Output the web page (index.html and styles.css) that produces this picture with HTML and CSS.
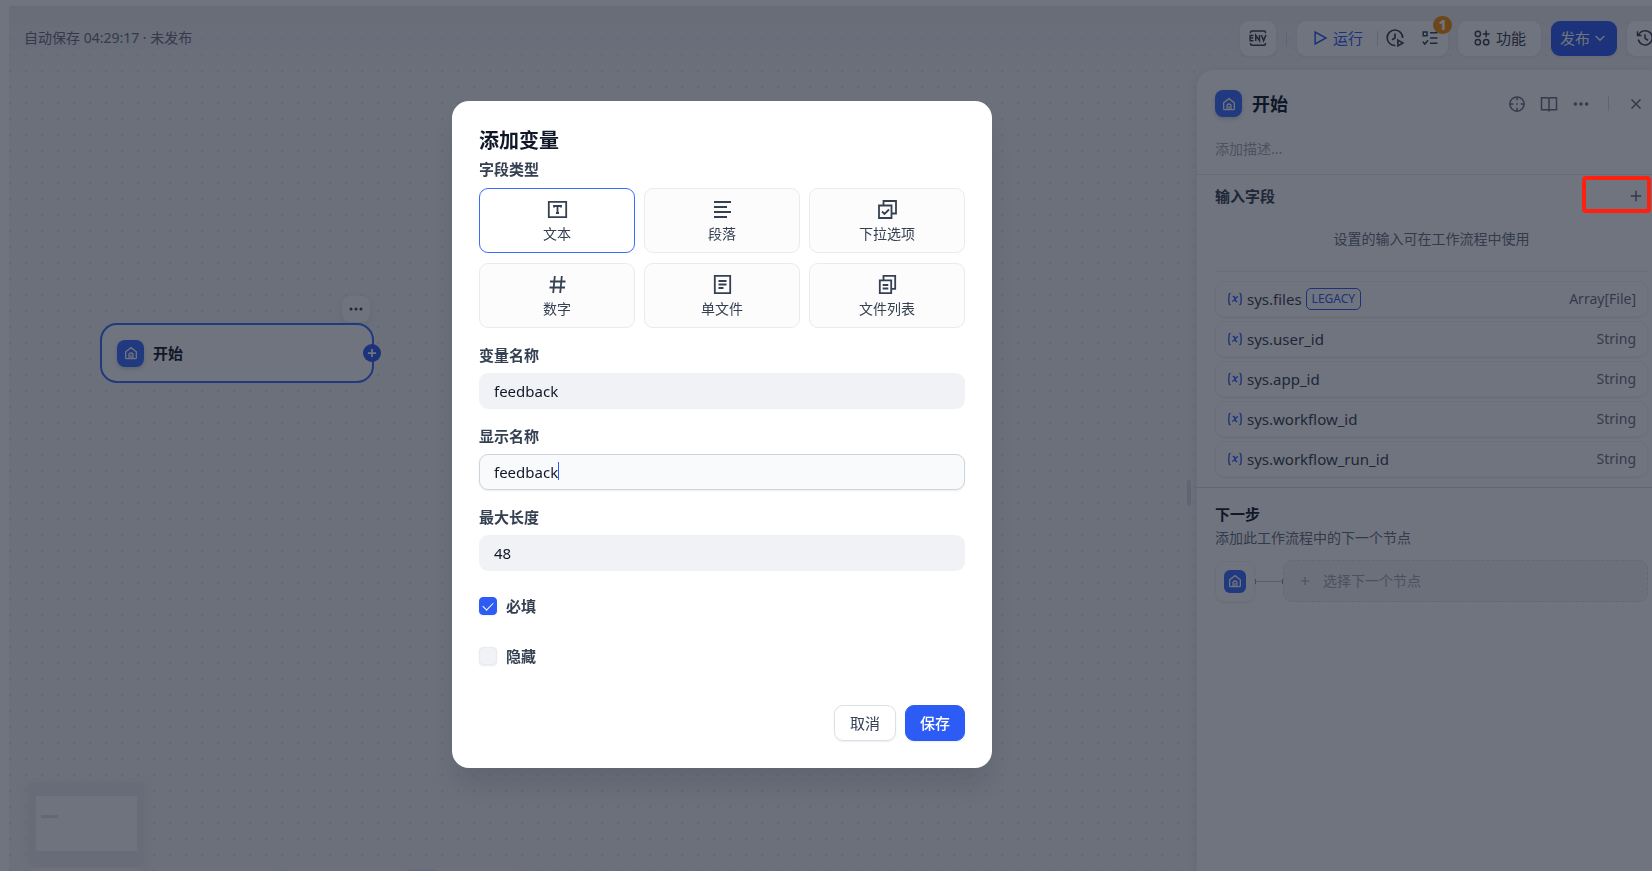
FILE: index.html
```html
<!DOCTYPE html>
<html lang="zh-CN">
<head>
<meta charset="utf-8">
<meta name="viewport" content="width=device-width, initial-scale=1">
<title>添加变量</title>
<link rel="stylesheet" href="styles.css">
</head>
<body>
<svg class="sprite" aria-hidden="true">
  <symbol id="home" viewBox="0 0 24 24"><path d="M4 10.200 12 4l8 6.200V19a1.500 1.500 0 0 1-1.500 1.500h-13A1.500 1.500 0 0 1 4 19z"/><path d="M9 20.500V15a3 3 0 0 1 6 0v5.500M12 15v5"/></symbol>
  <symbol id="plus" viewBox="0 0 24 24"><path d="M12 5v14M5 12h14"/></symbol>
  <symbol id="dots" viewBox="0 0 24 24"><g fill="currentColor" stroke="none"><circle cx="4.500" cy="12" r="2.300"/><circle cx="12" cy="12" r="2.300"/><circle cx="19.500" cy="12" r="2.300"/></g></symbol>
  <symbol id="var" viewBox="0 0 24 24"><path d="M5.500 3.500C3.500 3.500 3 5 3 6.500v3C3 11 2.500 12 1.500 12 2.500 12 3 13 3 14.500v3c0 1.500.5 3 2.500 3M18.500 3.500c2 0 2.500 1.500 2.500 3v3c0 1.500.5 2.500 1.500 2.500-1 0-1.500 1-1.500 2.500v3c0 1.500-.5 3-2.500 3"/><path d="M8.500 8.500c2.500-.8 3 1 3.500 3.500s1 4.300 3.500 3.500M16.500 8.500c-3 0-5.500 7-9 7"/></symbol>
</svg>

<div class="app">
  <main class="studio">
    <header class="topbar">
      <p class="save-state">自动保存 04:29:17 · 未发布</p>
      <div class="actions">
        <button class="btn btn-square" aria-label="环境变量">
          <svg class="icon i18" viewBox="0 0 24 24"><path d="M2 5.500V4.500A2 2 0 0 1 4 2.500h16a2 2 0 0 1 2 2v1M2 18.500v1a2 2 0 0 0 2 2h16a2 2 0 0 0 2-2v-1"/><path d="M6 8.500H1.500v7H6M1.500 12h4M9 16V8.500l5 7V8M16.500 8l3 7.500 3-7.500"/></svg>
        </button>
        <span class="bar"></span>
        <div class="btn run-group">
          <button class="plain run"><svg class="icon i18" viewBox="0 0 24 24"><path d="M5.500 4v16L20 12z"/></svg>运行</button>
          <span class="bar bar-small"></span>
          <button class="plain tool" aria-label="运行历史"><svg class="icon i20" viewBox="0 0 24 24"><path d="M12.500 21A9.300 9.300 0 1 1 21.200 12M12 6.500V12l-3.500 2"/><path d="M15.500 14.500v7l6-3.500z"/></svg></button>
          <button class="plain tool" aria-label="检查清单"><svg class="icon i18" viewBox="0 0 24 24"><path d="M3 4h5v5H3zM12 5h10M12 12h10M12 19h10M2.500 17l2.500 3 4.500-5"/></svg><span class="badge">1</span></button>
        </div>
        <button class="btn features"><svg class="icon i18" viewBox="0 0 24 24"><circle cx="6.500" cy="6.500" r="3.500"/><circle cx="6.500" cy="17.500" r="3.500"/><circle cx="17.500" cy="17.500" r="3.500"/><path d="M17.500 2v9M13 6.500h9"/></svg>功能</button>
        <button class="btn publish">发布<svg class="icon i16" viewBox="0 0 24 24"><path d="m5.500 9 6.500 6.500L18.500 9"/></svg></button>
        <button class="btn btn-square btn-history" aria-label="版本历史"><svg class="icon i18" viewBox="0 0 24 24"><path d="M2 3v5.500h5.500M3 14a9.500 9.500 0 1 0 .5-6M12 7v5.500l4 2.500"/></svg></button>
      </div>
    </header>

    <div class="workspace">
      <section class="canvas" aria-label="画布">
        <button class="node-menu" aria-label="更多"><svg class="icon i16" viewBox="0 0 24 24"><use href="#dots"/></svg></button>
        <div class="node">
          <span class="home-tile"><svg class="icon i16" viewBox="0 0 24 24"><use href="#home"/></svg></span>
          <span class="node-name">开始</span>
          <button class="node-add" aria-label="添加节点"><svg class="icon i14" viewBox="0 0 24 24"><use href="#plus"/></svg></button>
        </div>
        <div class="minimap"><div class="minimap-view"><span class="minimap-node"></span></div></div>
        <div class="dock"><span class="dock-a"></span><span class="dock-b"></span><span class="dock-c"><i></i></span></div>
        <span class="resizer"></span>
      </section>

      <aside class="panel">
        <div class="panel-head">
          <div class="panel-title">
            <span class="home-tile"><svg class="icon i16" viewBox="0 0 24 24"><use href="#home"/></svg></span>
            <h2>开始</h2>
            <div class="panel-tools">
              <button class="plain" aria-label="定位"><svg class="icon i18" viewBox="0 0 24 24"><circle cx="12" cy="12" r="9.500"/><path d="M12 2.500V7M12 17v4.500M2.500 12H7M17 12h4.500M12 11v2M11 12h2"/></svg></button>
              <button class="plain" aria-label="文档"><svg class="icon i18" viewBox="0 0 24 24"><path d="M12 5.500V22M12 5.500C12 4.500 11 3.500 9.500 3.500H2V19.500H9.500C11 19.500 12 20 12 21C12 20 13 19.500 14.500 19.500H22V3.500H14.500C13 3.500 12 4.500 12 5.500z"/></svg></button>
              <button class="plain" aria-label="更多"><svg class="icon i18" viewBox="0 0 24 24"><use href="#dots"/></svg></button>
              <span class="bar bar-tools"></span>
              <button class="plain close" aria-label="关闭"><svg class="icon i18" viewBox="0 0 24 24"><path d="m6 6 12 12M18 6 6 18"/></svg></button>
            </div>
          </div>
          <p class="panel-desc">添加描述...</p>
        </div>

        <section class="inputs">
          <div class="inputs-head">
            <h3>输入字段</h3>
            <button class="plain add-field" aria-label="添加输入字段"><svg class="icon i18" viewBox="0 0 24 24"><use href="#plus"/></svg></button>
          </div>
          <p class="inputs-hint">设置的输入可在工作流程中使用</p>
          <ul class="vars">
            <li><svg class="icon i16" viewBox="0 0 24 24"><use href="#var"/></svg><span>sys.files</span><span class="legacy">LEGACY</span><span class="type">Array[File]</span></li>
            <li><svg class="icon i16" viewBox="0 0 24 24"><use href="#var"/></svg><span>sys.user_id</span><span class="type">String</span></li>
            <li><svg class="icon i16" viewBox="0 0 24 24"><use href="#var"/></svg><span>sys.app_id</span><span class="type">String</span></li>
            <li><svg class="icon i16" viewBox="0 0 24 24"><use href="#var"/></svg><span>sys.workflow_id</span><span class="type">String</span></li>
            <li><svg class="icon i16" viewBox="0 0 24 24"><use href="#var"/></svg><span>sys.workflow_run_id</span><span class="type">String</span></li>
          </ul>
        </section>

        <section class="next">
          <h3>下一步</h3>
          <p>添加此工作流程中的下一个节点</p>
          <div class="next-row">
            <span class="next-from"><span class="home-tile home-small"><svg class="icon i16" viewBox="0 0 24 24"><use href="#home"/></svg></span></span>
            <span class="link"></span>
            <button class="next-pick"><svg class="icon i14" viewBox="0 0 24 24"><use href="#plus"/></svg>选择下一个节点</button>
          </div>
        </section>
      </aside>
    </div>
  </main>
</div>

<div class="overlay">
  <form class="modal" role="dialog" aria-labelledby="modal-title">
    <h1 id="modal-title">添加变量</h1>
    <h2 class="label">字段类型</h2>
    <div class="types">
      <button type="button" class="type-card selected"><svg class="icon i21" viewBox="0 0 21 21"><path d="M1.800 2.800h17.400v15.400H1.800zM7 8.500V7h7v1.500M10.500 7v7M9 14h3"/></svg>文本</button>
      <button type="button" class="type-card"><svg class="icon i21" viewBox="0 0 21 21"><path d="M2 3h17M2 8h13M2 13h17M2 18h13"/></svg>段落</button>
      <button type="button" class="type-card"><svg class="icon i21" viewBox="0 0 21 21"><path d="M2 6.500h12.500V19H2zM6.500 6.500V2H19v12.500h-4.500M5 12.500l2.500 2.500L12 10.500"/></svg>下拉选项</button>
      <button type="button" class="type-card"><svg class="icon i21" viewBox="0 0 21 21"><path d="M7.800 2 6.200 19M14.800 2l-1.600 17M3 7.500h15.500M2.500 13.500H18"/></svg>数字</button>
      <button type="button" class="type-card"><svg class="icon i21" viewBox="0 0 21 21"><path d="M2.800 1.800h15.400v17.400H2.800zM6.500 7h8M6.500 10.500h8M6.500 14h5"/></svg>单文件</button>
      <button type="button" class="type-card"><svg class="icon i21" viewBox="0 0 21 21"><path d="M2.800 6.300h11.400v12.900H2.800zM6.500 6V1.800h11.700v13h-4M5.700 11h5.600M5.700 14.500h5.600"/></svg>文件列表</button>
    </div>
    <div class="fields">
      <div class="field">
        <label class="label" for="var-name">变量名称</label>
        <input id="var-name" type="text" value="feedback">
      </div>
      <div class="field">
        <label class="label" for="show-name">显示名称</label>
        <div class="input-wrap"><input id="show-name" class="active" type="text" value="feedback"><span class="caret"></span></div>
      </div>
      <div class="field">
        <label class="label" for="max-len">最大长度</label>
        <input id="max-len" type="text" inputmode="numeric" value="48">
      </div>
    </div>
    <div class="checks">
      <label class="check label"><input type="checkbox" checked>必填</label>
      <label class="check label"><input type="checkbox">隐藏</label>
    </div>
    <div class="modal-foot">
      <button type="button" class="btn-cancel">取消</button>
      <button type="submit" class="btn-save">保存</button>
    </div>
  </form>
</div>
<span class="callout"></span>
</body>
</html>
```

FILE: styles.css
```css
:root {
  --text: #101828;
  --text-2: #354052;
  --text-3: #676f83;
  --muted: #a2a8b6;
  --blue: #2d5bf5;
  --line: #e4e7ec;
}

* { box-sizing: border-box; }

body {
  margin: 0;
  background: #fff;
  color: var(--text-2);
  font-family: "Noto Sans", "Noto Sans CJK SC", sans-serif;
  font-size: 14px;
  line-height: 20px;
}

h1, h2, h3, p, ul { margin: 0; padding: 0; }
button { font: inherit; color: inherit; margin: 0; padding: 0; border: 0; background: none; cursor: pointer; }
.sprite { position: absolute; width: 0; height: 0; }

.icon { display: block; flex: none; fill: none; stroke: currentColor; stroke-width: 2; }
.i14 { width: 14px; height: 14px; }
.i16 { width: 16px; height: 16px; }
.i18 { width: 18px; height: 18px; }
.i20 { width: 20px; height: 20px; }
.i21 { width: 21px; height: 21px; }

.app { display: flex; height: 100vh; padding: 6px 0 0 9px; overflow: hidden; }
.studio {
  flex: 1;
  min-width: 0;
  display: flex;
  flex-direction: column;
  background: radial-gradient(circle at 1px 1px, #e0e3ea 1px, transparent 2px) 0 0 / 16px 16px, #f2f4f7;
}

.topbar {
  display: flex;
  align-items: center;
  justify-content: space-between;
  height: 64px;
  padding-left: 15px;
  background: linear-gradient(#eaecf0, rgba(242, 244, 247, 0));
}
.save-state { color: var(--text-3); }
.actions { display: flex; align-items: center; gap: 10px; margin-right: -11px; }
.btn {
  display: flex;
  align-items: center;
  height: 35px;
  border-radius: 9px;
  background: #fff;
  box-shadow: 0 0 0 1px #e9ebf0, 0 1px 2px #d0d5dd;
  font-size: 15px;
}
.btn-square { width: 36px; justify-content: center; }
.bar { width: 1px; height: 15px; background: #d5d9e2; }
.run-group { padding-left: 14px; }
.plain { display: flex; align-items: center; justify-content: center; }
.run { gap: 4px; color: var(--blue); margin-right: 14px; }
.tool { position: relative; width: 35px; height: 35px; }
.badge {
  position: absolute;
  top: -5px;
  right: -4px;
  width: 19px;
  height: 18px;
  border-radius: 9px;
  background: #f79009;
  color: #fff;
  font-size: 14px;
  font-weight: 800;
  line-height: 18px;
  text-align: center;
}
.features { gap: 5px; padding: 0 15px; }
.publish { gap: 2px; padding: 0 9px; background: var(--blue); color: #fff; }

.workspace { flex: 1; display: flex; min-height: 0; }
.canvas { position: relative; flex: 1; min-width: 0; overflow: hidden; }

.home-tile {
  display: flex;
  align-items: center;
  justify-content: center;
  flex: none;
  width: 27px;
  height: 27px;
  border-radius: 8px;
  background: #3b6cff;
  color: #fff;
  box-shadow: 0 2px 4px #cfd4df;
}
.home-small { width: 22px; height: 23px; border-radius: 6px; box-shadow: none; }

.node {
  position: absolute;
  left: 91px;
  top: 253px;
  width: 274px;
  height: 60px;
  display: flex;
  align-items: center;
  gap: 9px;
  padding-left: 15px;
  border: 2px solid #3b6cff;
  border-radius: 17px;
  background: #fff;
}
.node-name { color: var(--text); font-size: 15px; font-weight: 600; }
.node-add {
  position: absolute;
  right: -9px;
  top: 19px;
  width: 18px;
  height: 18px;
  display: flex;
  align-items: center;
  justify-content: center;
  border-radius: 50%;
  background: var(--blue);
  color: #fff;
}
.node-add .icon { stroke-width: 3; }
.node-menu {
  position: absolute;
  left: 333px;
  top: 226px;
  width: 28px;
  height: 26px;
  display: flex;
  align-items: center;
  justify-content: center;
  border-radius: 8px;
  background: #fcfcfd;
  box-shadow: 0 2px 6px #dde1e9;
}

.minimap {
  position: absolute;
  left: 20px;
  bottom: 7px;
  width: 115px;
  height: 81px;
  padding: 13px 7px;
  background: #e9ebf0;
  box-shadow: 0 2px 8px #e4e7ec;
}
.minimap-view { height: 55px; padding: 19px 5px; background: #fcfcfd; }
.minimap-node { display: block; width: 17px; height: 3px; background: #dde0e6; }
.dock { position: absolute; left: 22px; bottom: 0; display: flex; gap: 15px; }
.dock span { height: 3px; border-radius: 8px 8px 0 0; background: #fbf8fd; }
.dock-a { width: 110px; }
.dock-b { width: 117px; }
.dock-c { width: 231px; padding: 1px 0 0 119px; }
.dock-c i { display: block; width: 30px; height: 2px; background: #e6e9fd; }
.resizer { position: absolute; right: 6px; top: 410px; width: 4px; height: 26px; border-radius: 2px; background: #d5d9e2; }

.panel { width: 455px; border-radius: 17px 0 0 0; background: #fff; box-shadow: 0 0 8px #dfe3ea; }
.panel-head { padding: 20px 7px 15px 18px; border-bottom: 1px solid var(--line); }
.panel-title { display: flex; align-items: center; gap: 10px; height: 27px; }
.panel-title h2 { color: var(--text); font-size: 18px; font-weight: 700; }
.panel-tools { display: flex; align-items: center; gap: 14px; margin-left: auto; color: var(--text-3); }
.bar-tools { margin-left: 4px; }
.close { margin-left: 4px; }
.panel-desc { margin-top: 22px; color: var(--muted); }

.inputs { padding: 10px 4px 10px 18px; border-bottom: 1px solid #d9dde5; }
.inputs-head { display: flex; align-items: center; justify-content: space-between; padding-right: 3px; }
.inputs h3, .next h3 { color: var(--text-2); font-size: 15px; font-weight: 600; line-height: 22px; }
.add-field { color: var(--text-3); }
.inputs-hint { margin-top: 22px; color: var(--text-3); text-align: center; }
.vars {
  display: flex;
  flex-direction: column;
  gap: 4px;
  margin-top: 22px;
  padding-top: 9px;
  border-top: 1px solid #eff1f4;
  list-style: none;
}
.vars li {
  display: flex;
  align-items: center;
  gap: 4px;
  height: 36px;
  padding: 0 11px;
  border: 1px solid #f2f4f7;
  border-radius: 9px;
  box-shadow: 0 1px 2px #eaecf0;
  color: var(--text-2);
  font-size: 15px;
}
.vars .icon { color: var(--blue); }
.legacy {
  padding: 0 5px;
  border: 1px solid var(--blue);
  border-radius: 5px;
  color: var(--blue);
  font-size: 12px;
}
.type { margin-left: auto; color: var(--text-3); font-size: 14px; }

.next { padding: 15px 4px 20px 18px; }
.next h3 { color: var(--text); }
.next p { margin-top: 3px; color: var(--text-3); }
.next-row { display: flex; align-items: center; margin-top: 12px; }
.next-from {
  display: flex;
  align-items: center;
  justify-content: center;
  width: 40px;
  height: 41px;
  border: 1px solid #f2f4f7;
  border-radius: 9px;
  box-shadow: 0 1px 2px #e4e7ec;
}
.link { width: 28px; height: 5px; border: solid #8f96a5; border-width: 0 1px; background: linear-gradient(#c4c9d3, #c4c9d3) 0 2px / 100% 1px no-repeat; }
.next-pick {
  flex: 1;
  display: flex;
  align-items: center;
  gap: 11px;
  height: 42px;
  padding-left: 14px;
  border: 1px dashed #dde0e6;
  border-radius: 9px;
  background: #f2f4f7;
  color: var(--muted);
}

.overlay {
  position: fixed;
  inset: 0;
  display: flex;
  align-items: center;
  justify-content: center;
  padding: 0 208px 2px 0;
  background: rgba(16, 24, 40, 0.6);
}
.modal {
  width: 540px;
  padding: 27px;
  border-radius: 17px;
  background: #fff;
  box-shadow: 0 20px 24px -4px rgba(16, 24, 40, 0.12);
}
.modal h1 { color: var(--text); font-size: 20px; font-weight: 700; line-height: 26px; }
.label { display: block; color: var(--text-2); font-size: 15px; font-weight: 600; line-height: 24px; }
.modal h2.label { margin: 3px 0 7px; }
.types { display: grid; grid-template-columns: repeat(3, 1fr); gap: 10px 9px; }
.type-card {
  display: flex;
  flex-direction: column;
  align-items: center;
  gap: 4px;
  height: 65px;
  padding-top: 10px;
  border: 1px solid #e9ebf0;
  border-radius: 9px;
  background: #fcfcfd;
}
.type-card .icon { stroke-width: 1.8; }
.type-card.selected { border-color: #3b6cff; background: #fff; }

.fields { display: flex; flex-direction: column; gap: 15px; margin-top: 15px; }
.field { display: flex; flex-direction: column; gap: 6px; }
.field input {
  width: 100%;
  height: 36px;
  padding: 0 14px;
  border: 1px solid transparent;
  border-radius: 9px;
  outline: 0;
  background: #f1f2f6;
  color: var(--text);
  font: inherit;
  font-size: 15px;
}
.field input.active { border-color: #d0d5dd; background: #f9fafb; box-shadow: 0 1px 2px #eceef2; }
.input-wrap { position: relative; display: flex; }
.caret { position: absolute; left: 79px; top: 8px; width: 1px; height: 18px; background: var(--blue); }

.checks { display: flex; flex-direction: column; gap: 26px; margin-top: 23px; }
.check { display: flex; align-items: center; align-self: flex-start; gap: 9px; }
.check input {
  appearance: none;
  width: 18px;
  height: 18px;
  margin: 0;
  border: 1px solid #e9ebf0;
  border-radius: 4px;
  background: #f1f2f6;
  box-shadow: 0 1px 2px #eceef2;
}
.check input:checked {
  display: grid;
  place-items: center;
  border-color: var(--blue);
  background: var(--blue);
}
.check input:checked::before {
  content: "";
  width: 9px;
  height: 5px;
  margin-bottom: 3px;
  border: solid #fff;
  border-width: 0 0 1px 1px;
  transform: rotate(-45deg);
}

.modal-foot { display: flex; justify-content: flex-end; gap: 9px; margin-top: 37px; }
.modal-foot button { height: 36px; padding: 0 15px; border: 1px solid #dcdfe5; border-radius: 9px; font-size: 15px; box-shadow: 0 1px 2px #eceef2; }
.modal-foot .btn-save { padding: 0 14px; border-color: var(--blue); background: var(--blue); color: #fff; font-weight: 500; }

.callout {
  position: fixed;
  top: 176px;
  right: 1px;
  width: 69px;
  height: 37px;
  border: 4px solid #ff2010;
  border-radius: 4px;
  pointer-events: none;
}
```
